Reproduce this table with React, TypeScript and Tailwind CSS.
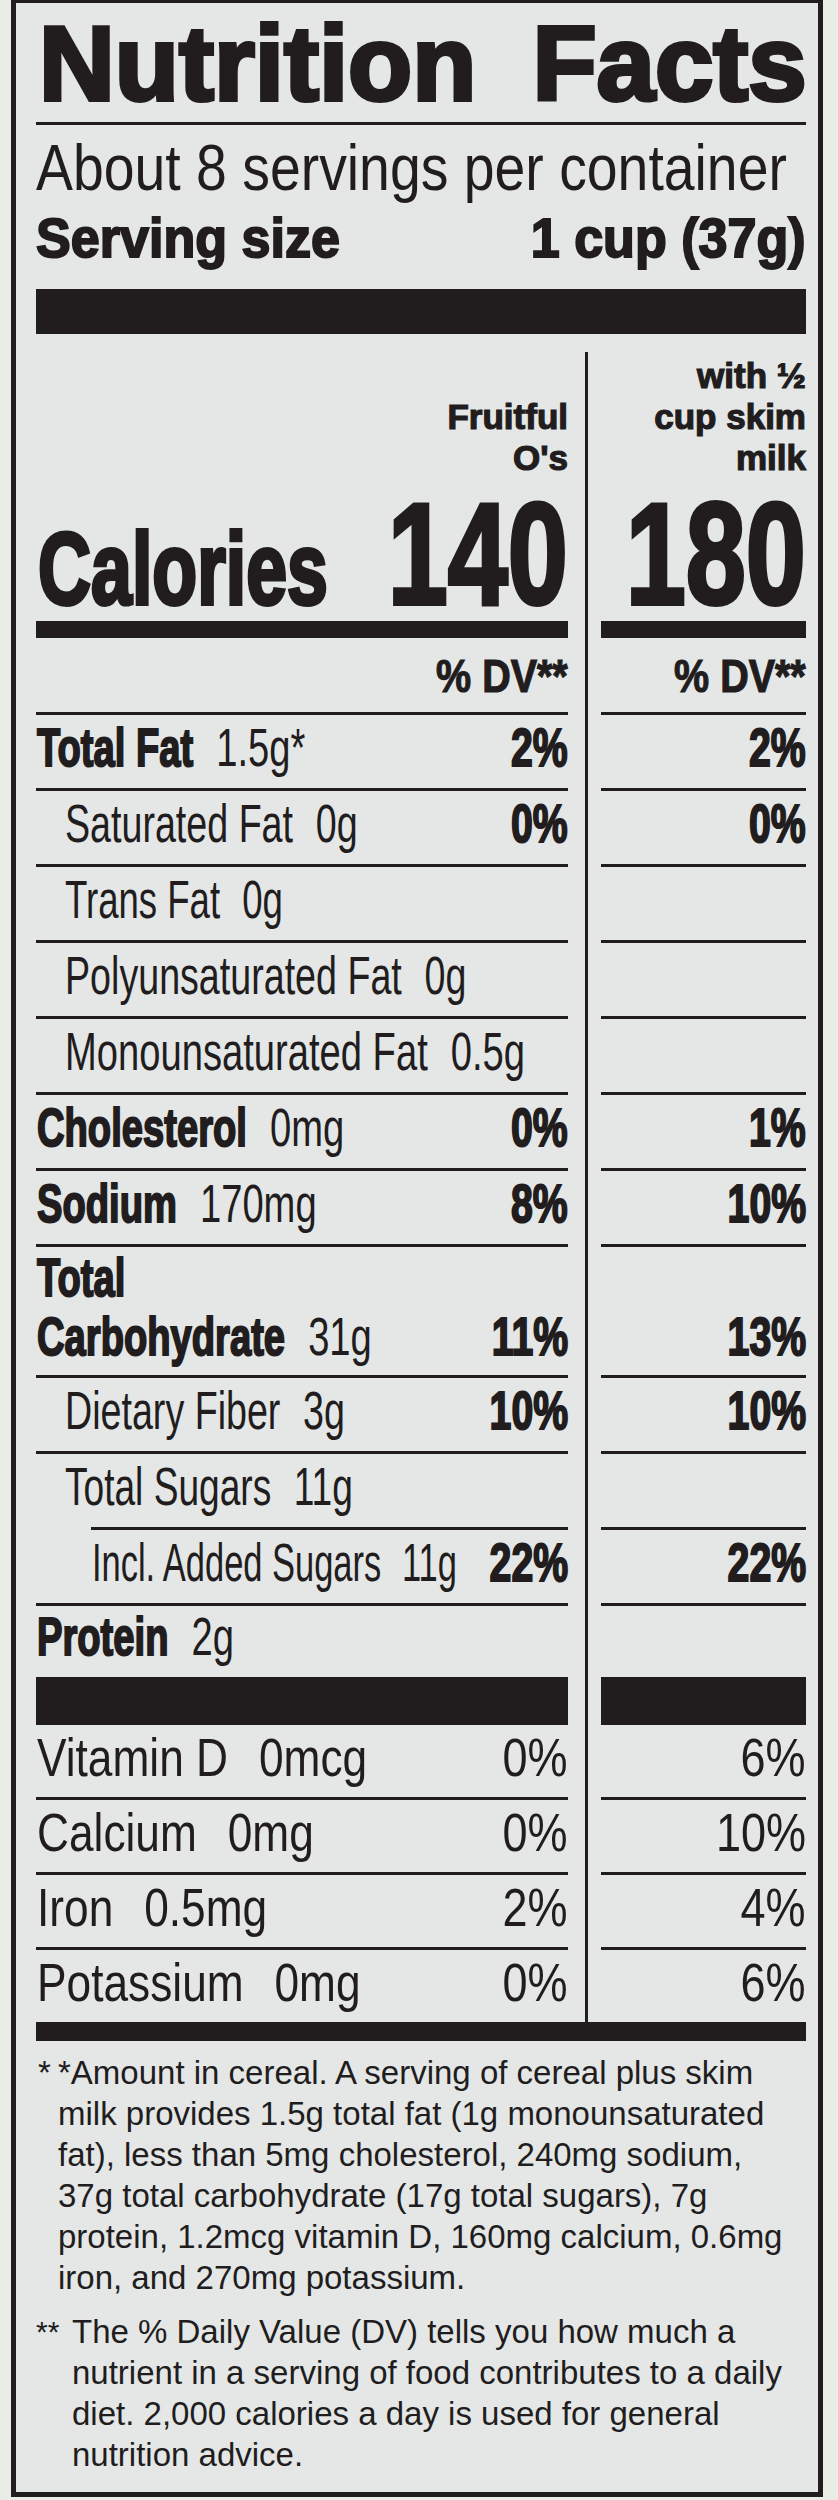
import type { ReactNode } from "react";

type Row = {
  label: string;
  lead?: string;
  amount?: string;
  bold?: boolean;
  level?: 0 | 1 | 2;
  scale: string;
  dv?: string;
  dvMilk?: string;
  h: string;
  pb: string;
  line: "full" | "indent" | "none";
};

// label text is a condensed face, so squeeze Liberation Sans horizontally
function Sq({ className, children }: { className: string; children: ReactNode }) {
  return <span className={`inline-block whitespace-nowrap ${className}`}>{children}</span>;
}

// heavier strokes for the black condensed headings
const heavy = "font-bold [-webkit-text-stroke:4px_currentColor]";
const semi = "font-bold [-webkit-text-stroke:2px_currentColor]";
const light = "font-bold [-webkit-text-stroke:1.2px_currentColor]";

const nutrients: Row[] = [
  { label: "Total Fat", amount: "1.5g*", bold: true, scale: "scale-x-[0.72]", dv: "2%", dvMilk: "2%", h: "h-[76px]", pb: "pb-[14px]", line: "full" },
  { label: "Saturated Fat", amount: "0g", level: 1, scale: "scale-x-[0.71]", dv: "0%", dvMilk: "0%", h: "h-[76px]", pb: "pb-[14px]", line: "full" },
  { label: "Trans Fat", amount: "0g", level: 1, scale: "scale-x-[0.69]", h: "h-[76px]", pb: "pb-[14px]", line: "full" },
  { label: "Polyunsaturated Fat", amount: "0g", level: 1, scale: "scale-x-[0.71]", h: "h-[76px]", pb: "pb-[14px]", line: "full" },
  { label: "Monounsaturated Fat", amount: "0.5g", level: 1, scale: "scale-x-[0.72]", h: "h-[76px]", pb: "pb-[14px]", line: "full" },
  { label: "Cholesterol", amount: "0mg", bold: true, scale: "scale-x-[0.72]", dv: "0%", dvMilk: "1%", h: "h-[76px]", pb: "pb-[14px]", line: "full" },
  { label: "Sodium", amount: "170mg", bold: true, scale: "scale-x-[0.72]", dv: "8%", dvMilk: "10%", h: "h-[76px]", pb: "pb-[14px]", line: "full" },
  { lead: "Total", label: "Carbohydrate", amount: "31g", bold: true, scale: "scale-x-[0.72]", dv: "11%", dvMilk: "13%", h: "h-[131px]", pb: "pb-[12px]", line: "full" },
  { label: "Dietary Fiber", amount: "3g", level: 1, scale: "scale-x-[0.71]", dv: "10%", dvMilk: "10%", h: "h-[76px]", pb: "pb-[14px]", line: "full" },
  { label: "Total Sugars", amount: "11g", level: 1, scale: "scale-x-[0.70]", h: "h-[76px]", pb: "pb-[14px]", line: "indent" },
  { label: "Incl. Added Sugars", amount: "11g", level: 2, scale: "scale-x-[0.65]", dv: "22%", dvMilk: "22%", h: "h-[76px]", pb: "pb-[14px]", line: "full" },
  { label: "Protein", amount: "2g", bold: true, scale: "scale-x-[0.72]", h: "h-[71px]", pb: "pb-[14px]", line: "none" },
];

const vitamins = [
  { label: "Vitamin D", amount: "0mcg", dv: "0%", dvMilk: "6%", h: "h-[75px]", last: false },
  { label: "Calcium", amount: "0mg", dv: "0%", dvMilk: "10%", h: "h-[75px]", last: false },
  { label: "Iron", amount: "0.5mg", dv: "2%", dvMilk: "4%", h: "h-[75px]", last: false },
  { label: "Potassium", amount: "0mg", dv: "0%", dvMilk: "6%", h: "h-[72px]", last: true },
];

const footAmount = [
  "*Amount in cereal. A serving of cereal plus skim",
  "milk provides 1.5g total fat (1g monounsaturated",
  "fat), less than 5mg cholesterol, 240mg sodium,",
  "37g total carbohydrate (17g total sugars), 7g",
  "protein, 1.2mcg vitamin D, 160mg calcium, 0.6mg",
  "iron, and 270mg potassium.",
];

const footDv = [
  "The % Daily Value (DV) tells you how much a",
  "nutrient in a serving of food contributes to a daily",
  "diet. 2,000 calories a day is used for general",
  "nutrition advice.",
];

function Rule({ indent = false }: { indent?: boolean }) {
  return <div className={`h-[3px] shrink-0 bg-[#211d1e] ${indent ? "ml-[55px]" : ""}`} />;
}

function LeftRow({ row }: { row: Row }) {
  const pad = row.level === 2 ? "pl-[56px]" : row.level === 1 ? "pl-[29px]" : "pl-[1px]";
  return (
    <div className={`flex shrink-0 flex-col ${row.h}`}>
      <div className={`flex flex-1 items-end text-[53px] leading-none ${row.pb}`}>
        <div className={`min-w-0 flex-1 ${pad}`}>
          {row.lead && (
            <div>
              <Sq className={`origin-left ${semi} ${row.scale}`}>{row.lead}</Sq>
            </div>
          )}
          <div className={row.lead ? "mt-[6px]" : ""}>
            <Sq className={`origin-left ${row.scale}`}>
              <span className={row.bold ? semi : ""}>{row.label}</span>
              {row.amount && <span className="ml-[32px]">{row.amount}</span>}
            </Sq>
          </div>
        </div>
        {row.dv && <Sq className={`shrink-0 origin-right scale-x-[0.74] ${semi}`}>{row.dv}</Sq>}
      </div>
      {row.line !== "none" && <Rule indent={row.line === "indent"} />}
    </div>
  );
}

function RightRow({ row }: { row: Row }) {
  return (
    <div className={`flex shrink-0 flex-col ${row.h}`}>
      <div className={`flex flex-1 items-end justify-end text-[53px] leading-none ${row.pb}`}>
        {row.dvMilk && <Sq className={`origin-right scale-x-[0.74] ${semi}`}>{row.dvMilk}</Sq>}
      </div>
      {row.line !== "none" && <Rule />}
    </div>
  );
}

export default function App() {
  return (
    <div className="h-[2500px] w-[838px] overflow-hidden bg-[#eaece8] font-['Liberation_Sans',Arial,sans-serif] text-[#211d1e]">
      <div className="ml-[11px] flex h-[2497px] w-[812px] flex-col overflow-hidden border-[5px] border-t-[3px] border-[#211d1e] bg-[#e4e7e5] pl-[20px] pr-[12px]">
        {/* title */}
        <div className="shrink-0 pl-[3px] pt-[8px] text-[105px] leading-none">
          <Sq className={`origin-left ${heavy}`}>
            Nutrition<span className="ml-[56px]">Facts</span>
          </Sq>
        </div>
        <div className="mt-[6px]">
          <Rule />
        </div>

        {/* servings */}
        <div className="mt-[11px] shrink-0 text-[64px] leading-none">
          <Sq className="origin-left scale-x-[0.865]">About 8 servings per container</Sq>
        </div>
        <div className="mt-[10px] flex shrink-0 items-baseline text-[56px] leading-none">
          <div className="min-w-0 flex-1">
            <Sq className={`origin-left scale-x-[0.93] ${semi}`}>Serving size</Sq>
          </div>
          <Sq className={`shrink-0 origin-right scale-x-[0.93] ${semi}`}>1 cup (37g)</Sq>
        </div>
        <div className="mt-[23px] h-[45px] shrink-0 bg-[#211d1e]" />

        {/* two columns */}
        <div className="flex h-[1688px] shrink-0">
          <div className="flex w-[549px] shrink-0 flex-col pr-[17px] pt-[18px]">
            <div className={`flex h-[126px] shrink-0 flex-col items-end justify-end text-right text-[35px] leading-[41px] ${light}`}>
              <div>Fruitful</div>
              <div>O's</div>
            </div>
            <div className="flex h-[143px] shrink-0 items-baseline pt-[4px]">
              <div className="min-w-0 flex-1 pl-[2px] text-[102px] leading-none">
                <Sq className={`origin-left scale-x-[0.72] ${heavy}`}>Calories</Sq>
              </div>
              <Sq className={`shrink-0 origin-right scale-x-[0.745] text-[145px] leading-none ${heavy}`}>140</Sq>
            </div>
            <div className="h-[17px] shrink-0 bg-[#211d1e]" />
            <div className="flex h-[77px] shrink-0 flex-col">
              <div className="flex flex-1 items-end justify-end pb-[13px] text-[47px] leading-none">
                <Sq className={`origin-right scale-x-[0.84] ${light}`}>% DV**</Sq>
              </div>
              <Rule />
            </div>
            {nutrients.map((row) => (
              <LeftRow key={row.label} row={row} />
            ))}
            <div className="h-[48px] shrink-0 bg-[#211d1e]" />
            {vitamins.map((v) => (
              <div key={v.label} className={`flex shrink-0 flex-col ${v.h}`}>
                <div className="flex flex-1 items-end pb-[13px] text-[53px] leading-none">
                  <div className="min-w-0 flex-1 pl-[1px]">
                    <Sq className="origin-left scale-x-[0.835]">
                      {v.label}
                      <span className="ml-[37px]">{v.amount}</span>
                    </Sq>
                  </div>
                  <Sq className="shrink-0 origin-right scale-x-[0.85]">{v.dv}</Sq>
                </div>
                {!v.last && <Rule />}
              </div>
            ))}
          </div>

          <div className="mt-[18px] flex min-w-0 flex-1 flex-col border-l-[3px] border-[#211d1e] pl-[13px]">
            <div className={`flex h-[126px] shrink-0 flex-col items-end justify-end text-right text-[35px] leading-[41px] ${light}`}>
              <div>with ½</div>
              <div>cup skim</div>
              <div>milk</div>
            </div>
            <div className="flex h-[143px] shrink-0 justify-end pt-[4px]">
              <Sq className={`origin-right scale-x-[0.745] text-[145px] leading-none ${heavy}`}>180</Sq>
            </div>
            <div className="h-[17px] shrink-0 bg-[#211d1e]" />
            <div className="flex h-[77px] shrink-0 flex-col">
              <div className="flex flex-1 items-end justify-end pb-[13px] text-[47px] leading-none">
                <Sq className={`origin-right scale-x-[0.84] ${light}`}>% DV**</Sq>
              </div>
              <Rule />
            </div>
            {nutrients.map((row) => (
              <RightRow key={row.label} row={row} />
            ))}
            <div className="h-[48px] shrink-0 bg-[#211d1e]" />
            {vitamins.map((v) => (
              <div key={v.label} className={`flex shrink-0 flex-col ${v.h}`}>
                <div className="flex flex-1 items-end justify-end pb-[13px] text-[53px] leading-none">
                  <Sq className="origin-right scale-x-[0.85]">{v.dvMilk}</Sq>
                </div>
                {!v.last && <Rule />}
              </div>
            ))}
          </div>
        </div>
        <div className="h-[19px] shrink-0 bg-[#211d1e]" />

        {/* footnotes */}
        <div className="mt-[11px] shrink-0 text-[33px] leading-[41px]">
          <div className="flex">
            <div className="w-[22px] shrink-0 pl-[2px]">*</div>
            <div>
              {footAmount.map((line) => (
                <div key={line} className="whitespace-nowrap">
                  {line}
                </div>
              ))}
            </div>
          </div>
          <div className="mt-[13px] flex">
            <div className="w-[36px] shrink-0 text-[30px]">**</div>
            <div>
              {footDv.map((line) => (
                <div key={line} className="whitespace-nowrap">
                  {line}
                </div>
              ))}
            </div>
          </div>
        </div>
      </div>
    </div>
  );
}
